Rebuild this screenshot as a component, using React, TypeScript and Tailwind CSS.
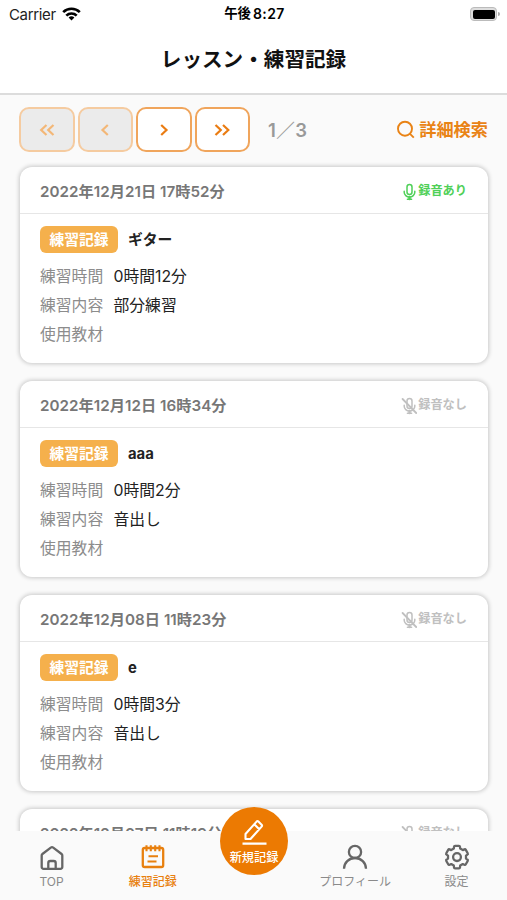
import { ReactElement, ReactNode } from "react";

interface LessonRecord {
  date: string;
  title: string;
  time: string;
  content: string;
  recorded: boolean;
}

const records: LessonRecord[] = [
  { date: "2022年12月21日 17時52分", title: "ギター", time: "0時間12分", content: "部分練習", recorded: true },
  { date: "2022年12月12日 16時34分", title: "aaa", time: "0時間2分", content: "音出し", recorded: false },
  { date: "2022年12月08日 11時23分", title: "e", time: "0時間3分", content: "音出し", recorded: false },
  { date: "2022年12月07日 11時19分", title: "e", time: "0時間1分", content: "音出し", recorded: false },
];

const MicIcon = ({ off = false }: { off?: boolean }): ReactElement => (
  <svg width="16" height="18" viewBox="0 0 16 18" fill="none" stroke="currentColor" strokeWidth="1.5" strokeLinecap="round">
    <rect x="6" y="1.6" width="5" height="10" rx="2.5" />
    <path d="M3.2 8.2v1a5.3 4.8 0 0 0 10.6 0v-1M6.4 16.3h4.2" />
    <path d="M8.5 14v2" strokeWidth="2.4" />
    {off && <path d="M1.6 2l13.6 14" strokeWidth="1.8" />}
  </svg>
);

const StatusBar = (): ReactElement => (
  <div className="grid h-7 grid-cols-3 items-center pl-[9px] pr-[7px] text-[15px] leading-none text-[#222]">
    <div className="flex items-center gap-[6px]">
      <span className="tracking-[-0.35px]">Carrier</span>
      <svg width="19" height="14" viewBox="0 0 19 14" fill="none" stroke="#000" strokeWidth="2.7">
        <path d="M1.2 5.1a12 12 0 0 1 16.6 0M4.3 8.6a7.5 7.5 0 0 1 10.4 0" />
        <path d="M9.5 13.5L6.6 10.6a4.2 4.2 0 0 1 5.8 0z" fill="#000" stroke="none" />
      </svg>
    </div>
    <div className="flex items-center justify-center whitespace-nowrap text-[13.4px] font-bold text-black">
      午後<span className="ml-[2px] text-[14px] font-semibold tracking-[0.4px]">8:27</span>
    </div>
    <div className="flex items-center justify-end gap-px">
      <div className="h-[14px] w-[27px] rounded-[4px] border border-[#bbb] bg-[#ddd] p-[1.5px]">
        <div className="h-full rounded-[2px] bg-black" />
      </div>
      <div className="h-[4px] w-[2px] rounded-r-full bg-[#aaa]" />
    </div>
  </div>
);

const PageButton = ({ disabled = false, d }: { disabled?: boolean; d: string }): ReactElement => (
  <button
    disabled={disabled}
    className={`flex h-[45px] w-[55.5px] items-center justify-center rounded-[10px] border-2 ${
      disabled ? "border-[#f5cba0] bg-[#ebebeb] text-[#f3b777]" : "border-[#f0a55c] bg-white text-[#ea7c12]"
    }`}
  >
    <svg width="16" height="12" viewBox="0 0 16 12" fill="none" stroke="currentColor" strokeWidth="2.2">
      <path d={d} />
    </svg>
  </button>
);

const Row = ({ label, value }: { label: string; value?: string }): ReactElement => (
  <div className="flex h-[29.3px] items-center text-[15.8px] leading-none">
    <span className="w-[73.5px] text-[#8c8c8c]">{label}</span>
    <span className="text-[#222]">{value}</span>
  </div>
);

const RecordCard = ({ record }: { record: LessonRecord }): ReactElement => (
  <article className="h-[196px] shrink-0 rounded-[12px] bg-white shadow-[0_0_4px_1px_rgba(0,0,0,0.2)]">
    <div className="flex h-[47px] items-center justify-between border-b border-[#e6e6e6] pl-5 pr-[21px]">
      <p className="mt-[3px] text-[15.2px] font-semibold leading-none tracking-[0.04px] text-[#777]">{record.date}</p>
      <div
        className={`mt-[3px] flex items-center text-[12.2px] font-bold leading-none ${record.recorded ? "text-[#4fd058]" : "text-[#c0c0c0]"}`}
      >
        <MicIcon off={!record.recorded} />
        <span className="ml-px">{record.recorded ? "録音あり" : "録音なし"}</span>
      </div>
    </div>
    <div className="px-5 pt-3">
      <div className="mb-[9px] flex items-center">
        <span className="flex h-[27px] w-[78px] items-center justify-center rounded-[6px] bg-[#f5b04c] pt-[2px] text-[14.8px] font-bold leading-none text-white">
          練習記録
        </span>
        <span className="ml-[10px] mt-px text-[14.8px] font-bold leading-none text-[#222]">{record.title}</span>
      </div>
      <Row label="練習時間" value={record.time} />
      <Row label="練習内容" value={record.content} />
      <Row label="使用教材" />
    </div>
  </article>
);

const NavItem = ({ label, active = false, children }: { label: string; active?: boolean; children: ReactNode }): ReactElement => (
  <a className={`flex w-[101px] flex-col items-center pt-3 ${active ? "text-[#e8800f]" : "text-[#666]"}`}>
    <svg width="28" height="28" viewBox="0 0 28 28" fill="none" stroke="currentColor" strokeWidth="2.3" strokeLinejoin="round">
      {children}
    </svg>
    <span className={`mt-1 whitespace-nowrap text-[12px] leading-[13px] ${active ? "font-medium" : "text-[#8a8a8a]"}`}>{label}</span>
  </a>
);

const BottomNav = (): ReactElement => (
  <nav className="relative flex h-[69px] shrink-0 justify-between bg-[#fafafa] pl-px">
    <NavItem label="TOP">
      <path d="M3.7 12.4q0-.9.7-1.4L12.8 4.6q1.2-.9 2.4 0l8.4 6.4q.7.5.7 1.4V24a1.8 1.8 0 0 1-1.8 1.8h-17A1.8 1.8 0 0 1 3.700 24zM10.300 25.500v-5.500a2 2 0 0 1 2-2h3.400a2 2 0 0 1 2 2v5.500" />
    </NavItem>
    <NavItem label="練習記録" active>
      <rect x="3.800" y="5" width="20.400" height="19" rx="1.8" />
      <path d="M7.500 2.200v6M11.800 2.200v6M16.200 2.200v6M20.500 2.200v6M9.500 13.300h9.500M8.500 18.500h9" strokeWidth="2.100" />
    </NavItem>
    <div className="w-[101px]" />
    <NavItem label="プロフィール">
      <circle cx="14" cy="8.900" r="6.100" />
      <path d="M3 25.800a11 10.800 0 0 1 22 0" />
    </NavItem>
    <NavItem label="設定">
      <path d="M11 3.900q.1-1 1.100-1h3.800q1 0 1.100 1l.2 1.700 2.600 1.500 1.600-.7q.9-.4 1.400.5l1.900 3.300q.5.900-.3 1.400l-1.400 1V15.600l1.400 1q.8.500.3 1.400l-1.900 3.300q-.5.900-1.400.5l-1.600-.7-2.600 1.500-.2 1.700q-.1 1-1.100 1h-3.800q-1 0-1.100-1l-.2-1.700-2.600-1.500-1.600.7q-.9.400-1.400-.5L3.300 18q-.5-.9.3-1.400l1.400-1V12.600l-1.400-1q-.8-.5-.3-1.400L5.200 6.900q.5-.9 1.400-.5l1.600.7 2.600-1.500z" />
      <circle cx="14" cy="14.100" r="3.900" />
    </NavItem>
    <button className="absolute left-[220px] top-[-24px] flex h-[68px] w-[68px] flex-col items-center rounded-full bg-[#ec7a02] pt-3 text-white">
      <svg width="26" height="26" viewBox="0 0 26 26" fill="none" stroke="currentColor" strokeWidth="2.100" strokeLinejoin="round">
        <path d="M4.500 20v-5L15.600 2.600q.9-.9 1.800 0l3.200 3.200q.9.900 0 1.800L9.500 20zM13.500 5.500l4.800 4.800M1.500 24.600h24" />
      </svg>
      <span className="mt-[6px] whitespace-nowrap text-[12.2px] font-medium leading-[13px]">新規記録</span>
    </button>
  </nav>
);

export default function App(): ReactElement {
  return (
    <div className="flex h-[900px] w-[507px] flex-col overflow-hidden bg-[#fafafa] font-['Inter','Noto_Sans_CJK_JP',sans-serif]">
      <header className="relative h-[95px] shrink-0 border-b-2 border-[#dcdcdc] bg-white">
        <StatusBar />
        <h1 className="pt-[22px] text-center text-[20.6px] font-bold leading-none text-[#111]">レッスン・練習記録</h1>
      </header>
      <main className="flex min-h-0 flex-1 flex-col overflow-hidden pl-5 pr-[19px] pt-3">
        <div className="-ml-px mb-[15px] flex shrink-0 items-center gap-[3px]">
          <PageButton disabled d="M7.500 1L2.200 6l5.300 5M14.500 1L9.200 6l5.300 5" />
          <PageButton disabled d="M10.800 1L5.500 6l5.300 5" />
          <PageButton d="M5.200 1l5.300 5-5.300 5" />
          <PageButton d="M1.500 1l5.300 5-5.300 5M9 1l5.300 5-5.300 5" />
          <span className="ml-[15px] mt-px text-[18.5px] font-semibold leading-none tracking-[0.5px] text-[#999]">1／3</span>
          <a className="ml-auto flex items-center gap-1 text-[17.2px] font-bold leading-none text-[#e98315]">
            <svg width="19" height="19" viewBox="0 0 19 19" fill="none" stroke="currentColor" strokeWidth="1.9">
              <circle cx="9" cy="8.700" r="7" />
              <path d="M14 13.800l3.800 3.800" />
            </svg>
            <span className="mt-px">詳細検索</span>
          </a>
        </div>
        <div className="flex shrink-0 flex-col gap-[18px]">
          {records.map((record) => (
            <RecordCard key={record.date} record={record} />
          ))}
        </div>
      </main>
      <BottomNav />
    </div>
  );
}
